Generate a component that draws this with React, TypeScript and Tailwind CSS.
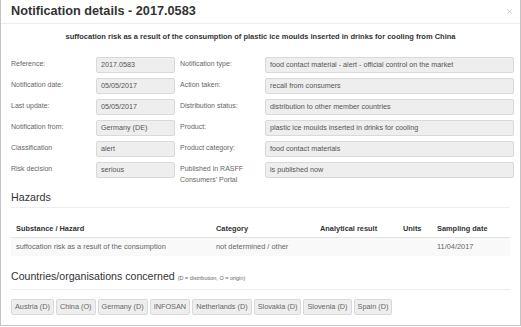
import { X } from 'lucide-react';

interface Field {
  label: string;
  value: string;
}

const leftFields: Field[] = [
  { label: 'Reference:', value: '2017.0583' },
  { label: 'Notification date:', value: '05/05/2017' },
  { label: 'Last update:', value: '05/05/2017' },
  { label: 'Notification from:', value: 'Germany (DE)' },
  { label: 'Classification', value: 'alert' },
  { label: 'Risk decision', value: 'serious' },
];

const rightFields: Field[] = [
  { label: 'Notification type:', value: 'food contact material - alert - official control on the market' },
  { label: 'Action taken:', value: 'recall from consumers' },
  { label: 'Distribution status:', value: 'distribution to other member countries' },
  { label: 'Product:', value: 'plastic ice moulds inserted in drinks for cooling' },
  { label: 'Product category:', value: 'food contact materials' },
  { label: 'Published in RASFF Consumers\u2019 Portal', value: 'is published now' },
];

const countries = ['Austria (D)', 'China (O)', 'Germany (D)', 'INFOSAN', 'Netherlands (D)', 'Slovakia (D)', 'Slovenia (D)', 'Spain (D)'];

function Box({ children }: { children: React.ReactNode }) {
  return (
    <div className="h-[16px] self-start flex items-center px-[4px] bg-[#eeeeee] border border-[#d9d9d9] rounded-[2px] text-[7.2px] text-[#555] whitespace-nowrap overflow-hidden">
      {children}
    </div>
  );
}

export default function App() {
  return (
    <div className="w-[521px] h-[326px] bg-white border-x border-b border-[#c4c4c4] font-['Liberation_Sans',Arial,sans-serif] overflow-hidden">
      {/* Header */}
      <div className="h-[24px] border-b border-[#ececec] flex items-center justify-between pl-[10px] pr-[7px]">
        <h4 className="text-[12.7px] font-bold text-[#333] leading-none">Notification details - 2017.0583</h4>
        <X className="w-[7px] h-[7px] text-[#c8c8c8]" strokeWidth={3} />
      </div>

      {/* Subject */}
      <p className="mt-[9px] text-center text-[7.5px] leading-[8px] font-bold text-[#333]">
        suffocation risk as a result of the consumption of plastic ice moulds inserted in drinks for cooling from China
      </p>

      {/* Details form */}
      <div className="mt-[16px] px-[10px] grid grid-cols-[85px_79px_90px_249px] gap-y-[5px] text-[7px] text-[#666]">
        {leftFields.map((f, i) => (
          <div key={f.label} className="contents">
            <div className="pt-[2px] leading-[10.5px]">{f.label}</div>
            <Box>{f.value}</Box>
            <div className="pl-[5px] pt-[2px] leading-[10.5px] pr-[20px]">{rightFields[i].label}</div>
            <Box>{rightFields[i].value}</Box>
          </div>
        ))}
      </div>

      {/* Hazards */}
      <div className="mt-[6px] mx-[10px]">
        <h3 className="text-[10.7px] leading-[12px] text-[#333] pb-[4px] border-b border-[#eeeeee]">Hazards</h3>
        <table className="mt-[12px] w-full text-[7.4px] border-collapse">
          <thead>
            <tr className="h-[17px] border-b border-[#e2e2e2] text-left text-[#333]">
              <th className="w-[200px] pl-[5px] font-bold">Substance / Hazard</th>
              <th className="w-[104px] pl-[5px] font-bold">Category</th>
              <th className="w-[83px] pl-[5px] font-bold">Analytical result</th>
              <th className="w-[34px] pl-[5px] font-bold">Units</th>
              <th className="pl-[5px] font-bold">Sampling date</th>
            </tr>
          </thead>
          <tbody>
            <tr className="h-[19px] bg-[#f9f9f9] text-[#666]">
              <td className="pl-[5px]">suffocation risk as a result of the consumption</td>
              <td className="pl-[5px]">not determined / other</td>
              <td className="pl-[5px]"></td>
              <td className="pl-[5px]"></td>
              <td className="pl-[5px]">11/04/2017</td>
            </tr>
          </tbody>
        </table>
      </div>

      {/* Countries */}
      <div className="mt-[14px] mx-[10px]">
        <h3 className="text-[10.6px] leading-[12px] text-[#333] pb-[5px] border-b border-[#eeeeee]">
          Countries/organisations concerned <span className="text-[5.5px] text-[#666]">(D = distribution, O = origin)</span>
        </h3>
        <div className="mt-[9px] flex gap-[2px]">
          {countries.map((c) => (
            <span key={c} className="h-[16px] flex items-center px-[3px] bg-[#eeeeee] border border-[#d9d9d9] rounded-[2px] text-[7.3px] text-[#666]">
              {c}
            </span>
          ))}
        </div>
      </div>
    </div>
  );
}
